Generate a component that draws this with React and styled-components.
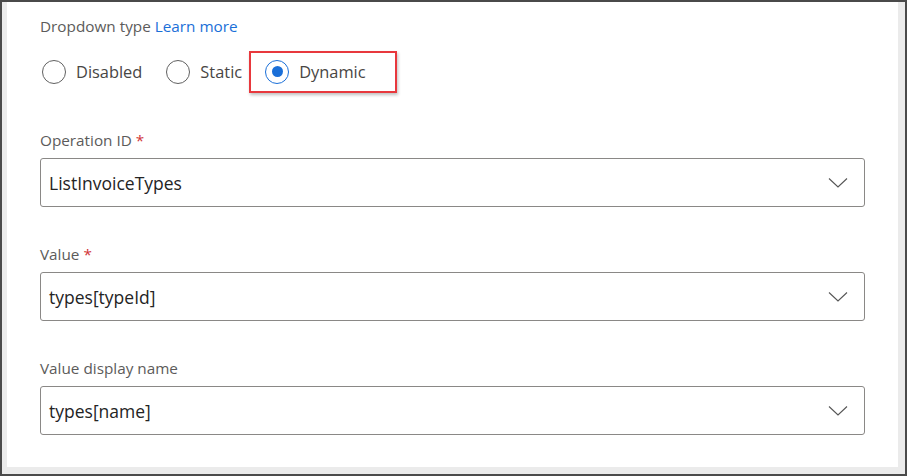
import React, { useState } from 'react';
import styled, { createGlobalStyle } from 'styled-components';

const GlobalStyle = createGlobalStyle`
  html, body {
    margin: 0;
    padding: 0;
    background: #ffffff;
  }
  body {
    font-family: "Open Sans", "Noto Sans", sans-serif;
  }
`;

const Frame = styled.div`
  width: 907px;
  height: 476px;
  box-sizing: border-box;
  border: 2px solid #4a4a4a;
  background: #ebebeb;
  padding: 0 7px 7px 5px;
`;

const Panel = styled.div`
  height: 100%;
  background: #ffffff;
  box-sizing: border-box;
  padding: 14px 33px 0 33px;
  display: flex;
  flex-direction: column;
`;

const Label = styled.div`
  font-size: 15.3px;
  color: #5c5b5a;
  line-height: 20px;
  margin-top: ${props => props.$top || 0}px;
`;

const LinkText = styled.a`
  color: #1a6fd8;
  text-decoration: none;
  cursor: pointer;
`;

const Required = styled.span`
  color: #d13438;
  margin-left: 4px;
`;

const RadioRow = styled.div`
  display: flex;
  align-items: center;
  margin-top: 14px;
  height: 43px;
`;

const RadioOption = styled.label`
  display: flex;
  align-items: center;
  gap: 10px;
  font-size: 16.4px;
  color: #484644;
  cursor: pointer;
  margin-right: ${props => props.$gap}px;
  padding: ${props => (props.$highlight ? '0 29px 0 14px' : '0')};
  height: 38px;
  border: ${props => (props.$highlight ? '2px solid #e8383d' : '2px solid transparent')};
  box-shadow: ${props => (props.$highlight ? '1px 2px 3px rgba(0,0,0,0.25)' : 'none')};
  margin-left: ${props => (props.$highlight ? '-17px' : '0')};
`;

const Circle = styled.span`
  width: 22px;
  height: 22px;
  border-radius: 50%;
  border: 1px solid ${props => (props.$checked ? '#1a6fd8' : '#616161')};
  display: flex;
  align-items: center;
  justify-content: center;
  flex-shrink: 0;
  &::after {
    content: '';
    width: 11px;
    height: 11px;
    border-radius: 50%;
    background: ${props => (props.$checked ? '#1a6fd8' : 'transparent')};
  }
`;

const Select = styled.div`
  margin-top: 8px;
  height: 49px;
  box-sizing: border-box;
  border: 1px solid #8a8886;
  border-radius: 3px;
  display: flex;
  align-items: center;
  justify-content: space-between;
  padding: 0 16px 0 8px;
  font-size: 17.5px;
  color: #242424;
  cursor: pointer;
`;

const Chevron = () => (
  <svg width="20" height="12" viewBox="0 0 20 12" fill="none">
    <path d="M1 1.5 L10 10 L19 1.5" stroke="#555" strokeWidth="1.1" />
  </svg>
);

const options = [
  { key: 'disabled', label: 'Disabled', gap: 20 },
  { key: 'static', label: 'Static', gap: 22 },
  { key: 'dynamic', label: 'Dynamic', gap: 0 },
];

const fields = [
  { label: 'Operation ID', required: true, value: 'ListInvoiceTypes' },
  { label: 'Value', required: true, value: 'types[typeId]' },
  { label: 'Value display name', required: false, value: 'types[name]' },
];

export default function App() {
  const [type, setType] = useState('dynamic');
  return (
    <>
      <GlobalStyle />
      <Frame>
        <Panel>
          <Label>
            Dropdown type <LinkText>Learn more</LinkText>
          </Label>
          <RadioRow>
            {options.map(o => (
              <RadioOption
                key={o.key}
                $gap={o.gap}
                $highlight={o.key === 'dynamic'}
                onClick={() => setType(o.key)}
              >
                <Circle $checked={type === o.key} />
                {o.label}
              </RadioOption>
            ))}
          </RadioRow>
          {fields.map(f => (
            <React.Fragment key={f.label}>
              <Label $top={37}>
                {f.label}
                {f.required && <Required>*</Required>}
              </Label>
              <Select>
                <span>{f.value}</span>
                <Chevron />
              </Select>
            </React.Fragment>
          ))}
        </Panel>
      </Frame>
    </>
  );
}
